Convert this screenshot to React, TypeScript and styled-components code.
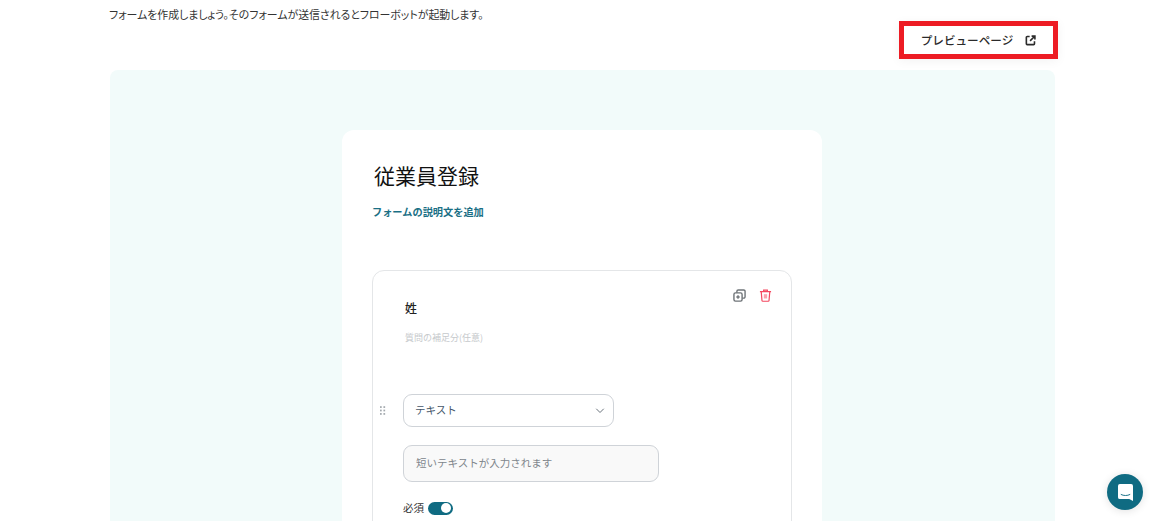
import React from "react";
import styled, { createGlobalStyle } from "styled-components";

const Global = createGlobalStyle`
  html, body { margin: 0; padding: 0; height: 521px; overflow: hidden; background: #fff; }
  body { font-family: "Noto Sans CJK JP", "Noto Sans", sans-serif; color: #222; }
`;

const Page = styled.div`
  width: 1152px; height: 521px; overflow: hidden; box-sizing: border-box;
  padding: 7px 97px 0 110px; display: flex; flex-direction: column;
`;
const Intro = styled.p`
  flex: none; margin: 0 0 0 -1px; height: 14px; font-size: 10.9px; line-height: 14px; color: #333; white-space: nowrap;
  font-feature-settings: "palt";
`;
const Toolbar = styled.div`
  flex: none; display: flex; justify-content: flex-end; margin: 0 -3px 0 0; height: 49px;
`;
const PreviewButton = styled.button`
  margin: 0; width: 159px; height: 38px; box-sizing: border-box; border: 5px solid #ed1c24; background: #fff;
  display: flex; align-items: center; justify-content: center; gap: 12px; padding: 0;
  font: 500 11.6px "Noto Sans CJK JP", sans-serif; color: #2b2b2b; box-shadow: 0 2px 10px rgba(0,0,0,.05);
`;
const Panel = styled.section`
  flex: 1; background: #f2fbfa; border-radius: 8px 8px 0 0; padding: 60px 233px 0 232px;
`;
const Card = styled.div`
  height: 420px; background: #fff; border-radius: 12px; box-sizing: border-box; padding: 29px 30px 0 30px;
`;
const Title = styled.h1`
  margin: 0 0 0 2px; font-size: 21px; line-height: 32px; font-weight: 400; color: #111;
`;
const AddDescription = styled.a`
  display: block; margin-top: 13px; font-size: 10.2px; line-height: 16px; font-weight: 700; color: #1a6f85;
`;
const Question = styled.div`
  position: relative; margin-top: 50px; height: 300px; border: 1px solid #e4e6e8; border-radius: 12px;
  box-sizing: border-box; padding: 28px 0 0 30px;
`;
const Actions = styled.div`
  position: absolute; top: 18px; right: 19px; display: flex; gap: 13px; align-items: center;
`;
const QuestionName = styled.div`
  margin-left: 2px; font-size: 12px; line-height: 18px; font-weight: 500; color: #222;
`;
const Hint = styled.div`
  margin: 14px 0 0 2px; font-size: 9px; line-height: 14px; color: #c6c9cc;
`;
const Handle = styled.svg`
  position: absolute; left: 7px; top: 135px; color: #a2a8ad;
`;
const TypeSelect = styled.div`
  margin-top: 49px; width: 211px; height: 33px; box-sizing: border-box; border: 1px solid #cfd3d8; border-radius: 9px;
  display: flex; align-items: center; justify-content: space-between; padding: 0 8px 2px 11px;
  font-size: 10.5px; color: #45566a; background: #fff;
`;
const SampleInput = styled.div`
  margin-top: 18px; width: 256px; height: 37px; box-sizing: border-box; border: 1px solid #cfd3d8; border-radius: 9px;
  display: flex; align-items: center; padding: 0 12px 2px; font-size: 10.5px; color: #80868c; background: #f9f9f9;
`;
const RequiredRow = styled.div`
  margin-top: 18px; display: flex; align-items: center; gap: 4px; font-size: 10.5px; line-height: 16px; color: #333;
`;
const Toggle = styled.span`
  width: 25px; height: 13px; border-radius: 7px; background: #0f6b82; display: flex; justify-content: flex-end; align-items: center; padding: 0 2px; box-sizing: border-box;
`;
const Knob = styled.span`
  width: 10px; height: 10px; border-radius: 50%; background: #fff;
`;
const ChatButton = styled.button`
  position: fixed; left: 1107px; top: 474px; width: 36px; height: 36px; padding: 0; border: 0; border-radius: 50%;
  background: #0f6b82; display: flex; align-items: center; justify-content: center; box-shadow: 0 1px 8px rgba(0,0,0,.12);
`;

export default function App() {
  return (
    <>
      <Global />
      <Page>
        <Intro>フォームを作成しましょう。そのフォームが送信されるとフローボットが起動します。</Intro>
        <Toolbar>
          <PreviewButton>
            プレビューページ
            <svg width="11" height="11" viewBox="0 0 13 13" fill="none" stroke="#2b2b2b" strokeWidth="1.9">
              <path d="M5.5 1.8H2.6a1 1 0 0 0-1 1v7.6a1 1 0 0 0 1 1h7.6a1 1 0 0 0 1-1V7.5" />
              <path d="M7.8 1.3h3.9v3.9M11.5 1.5 6 7" />
            </svg>
          </PreviewButton>
        </Toolbar>
        <Panel>
          <Card>
            <Title>従業員登録</Title>
            <AddDescription>フォームの説明文を追加</AddDescription>
            <Question>
              <Actions>
                <svg width="13" height="13" viewBox="0 0 14 14" fill="none" stroke="#6f7478" strokeWidth="1.5">
                  <rect x="1" y="4.2" width="8.8" height="8.8" rx="1.6" />
                  <path d="M4.2 4V2.4A1.4 1.4 0 0 1 5.6 1h6A1.4 1.4 0 0 1 13 2.4v6a1.4 1.4 0 0 1-1.4 1.4H10" />
                  <path d="M5.4 6.8v3.6M3.6 8.6h3.6" />
                </svg>
                <svg width="13" height="13" viewBox="0 0 14 14" fill="none" stroke="#f4475f" strokeWidth="1.3">
                  <path d="M1 2.9h12M5 2.7V1.2h4v1.5" />
                  <path d="M2.4 3l.8 9.4a.9.9 0 0 0 .9.8h5.8a.9.9 0 0 0 .9-.8l.8-9.4" />
                  <rect x="5.2" y="5.6" width="3.6" height="4.6" fill="#f9a3af" stroke="none" />
                </svg>
              </Actions>
              <QuestionName>姓</QuestionName>
              <Hint>質問の補足分(任意)</Hint>
              <Handle width="6" height="9" viewBox="0 0 7 10" fill="currentColor">
                <rect x="0" y="0" width="2" height="2" />
                <rect x="4" y="0" width="2" height="2" />
                <rect x="0" y="4" width="2" height="2" />
                <rect x="4" y="4" width="2" height="2" />
                <rect x="0" y="8" width="2" height="2" />
                <rect x="4" y="8" width="2" height="2" />
              </Handle>
              <TypeSelect>
                テキスト
                <svg width="10" height="10" viewBox="0 0 12 12" fill="none" stroke="#6a737c" strokeWidth="1.2">
                  <path d="M1.5 4.5 6 9l4.5-4.5" />
                </svg>
              </TypeSelect>
              <SampleInput>短いテキストが入力されます</SampleInput>
              <RequiredRow>
                必須
                <Toggle><Knob /></Toggle>
              </RequiredRow>
            </Question>
          </Card>
        </Panel>
      </Page>
      <ChatButton aria-label="chat">
        <svg width="15" height="17" viewBox="0 0 16 18">
          <path d="M2 0h12a2 2 0 0 1 2 2v16l-4-2H2a2 2 0 0 1-2-2V2a2 2 0 0 1 2-2z" fill="#fff" />
          <path d="M3 11c3 1.6 7 1.6 10 0" stroke="#0f6b82" strokeWidth="1" fill="none" />
        </svg>
      </ChatButton>
    </>
  );
}
